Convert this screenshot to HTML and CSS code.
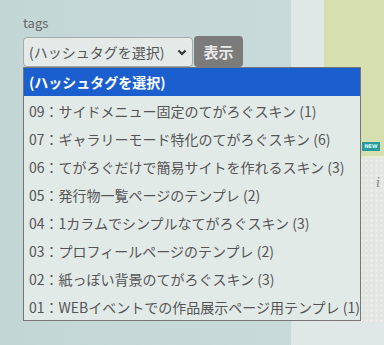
FILE: index.html
```html
<!DOCTYPE html>
<html lang="ja">
<head>
  <meta charset="UTF-8">
  <meta name="viewport" content="width=device-width, initial-scale=1.0">
  <title>tags</title>
  <link rel="stylesheet" href="styles.css">
</head>
<body>
  <div class="page">
    <div class="main">
      <label class="label" for="tag">tags</label>
      <div class="form">
        <div class="select" id="tag">
          <span>(ハッシュタグを選択)</span>
          <svg class="chevron" width="10" height="7" viewBox="0 0 10 7"><path d="M1.5 1.5 L5 5 L8.5 1.5" fill="none" stroke="#333" stroke-width="2"/></svg>
        </div>
        <button class="btn">表示</button>

        <!-- open select popup -->
        <ul class="options">
          <li class="active">(ハッシュタグを選択)</li>
          <li>09：サイドメニュー固定のてがろぐスキン (1)</li>
          <li>07：ギャラリーモード特化のてがろぐスキン (6)</li>
          <li>06：てがろぐだけで簡易サイトを作れるスキン (3)</li>
          <li>05：発行物一覧ページのテンプレ (2)</li>
          <li>04：1カラムでシンプルなてがろぐスキン (3)</li>
          <li>03：プロフィールページのテンプレ (2)</li>
          <li>02：紙っぽい背景のてがろぐスキン (3)</li>
          <li>01：WEBイベントでの作品展示ページ用テンプレ (1)</li>
        </ul>
      </div>
    </div>

    <div class="side">
      <div class="card">
        <div class="card-img">
          <span class="badge">NEW</span>
        </div>
        <div class="card-body">
          <span class="mark">i</span>
        </div>
      </div>
    </div>
  </div>
</body>
</html>
```

FILE: styles.css
```css
body {
  margin: 0;
  font-family: "Noto Sans CJK JP", "Noto Sans", sans-serif;
  background: linear-gradient(90deg, #c3d6d6 0%, #cbdbdb 100%);
  overflow: hidden;
}
.page {
  display: flex;
  height: 345px;
}
.main {
  width: 291px;
  flex-shrink: 0;
  padding: 14px 0 0 23px;
  box-sizing: border-box;
}
.label {
  display: block;
  font-size: 13px;
  line-height: 18px;
  color: #666;
  margin-bottom: 4px;
}
.form {
  position: relative;
  display: flex;
  align-items: center;
  gap: 1px;
}
.select {
  width: 170px;
  height: 30px;
  box-sizing: border-box;
  border: 1px solid #a4acab;
  border-radius: 4px;
  background: #e3eae8;
  display: flex;
  align-items: center;
  justify-content: space-between;
  padding: 0 5px 0 5px;
  font-size: 14px;
  color: #555;
}
.chevron {
  margin-top: 1px;
}
.btn {
  width: 49px;
  height: 31px;
  border: none;
  border-radius: 4px;
  background: #7b7b7b;
  color: #e9e9e9;
  font-family: inherit;
  font-size: 15px;
  font-weight: bold;
  padding: 0;
}
.options {
  position: absolute;
  top: 31px;
  left: 0;
  margin: 0;
  padding: 0;
  list-style: none;
  width: 338px;
  box-sizing: border-box;
  border: 1px solid #777;
  background: #e2eae8;
  z-index: 2;
}
.options li {
  height: 28px;
  line-height: 30px;
  padding-left: 5px;
  font-size: 14px;
  color: #555;
  white-space: nowrap;
}
.options li.active {
  background: #1b5fcf;
  color: #fff;
  font-weight: bold;
  line-height: 28px;
}
.side {
  flex: 1;
  background: #dfe8e6;
  padding-left: 33px;
}
.card {
  width: 60px;
}
.card-img {
  position: relative;
  height: 158px;
  background: #d5dfb0;
  border-bottom: 2px solid #e6ecd0;
  box-sizing: border-box;
}
.badge {
  position: absolute;
  left: 38px;
  bottom: 5px;
  width: 18px;
  height: 9px;
  background: #2b9a9c;
  color: #dff;
  font-family: "DejaVu Sans", sans-serif;
  font-size: 5px;
  font-weight: bold;
  line-height: 9px;
  text-align: center;
}
.card-body {
  height: 164px;
  background-color: #e3e5e3;
  background-image: radial-gradient(#eceeec 1px, transparent 1.2px);
  background-size: 5px 5px;
  padding: 10px 0 0 52px;
  box-sizing: border-box;
}
.mark {
  font-family: "DejaVu Serif", serif;
  font-style: italic;
  font-size: 13px;
  color: #888;
}
```
